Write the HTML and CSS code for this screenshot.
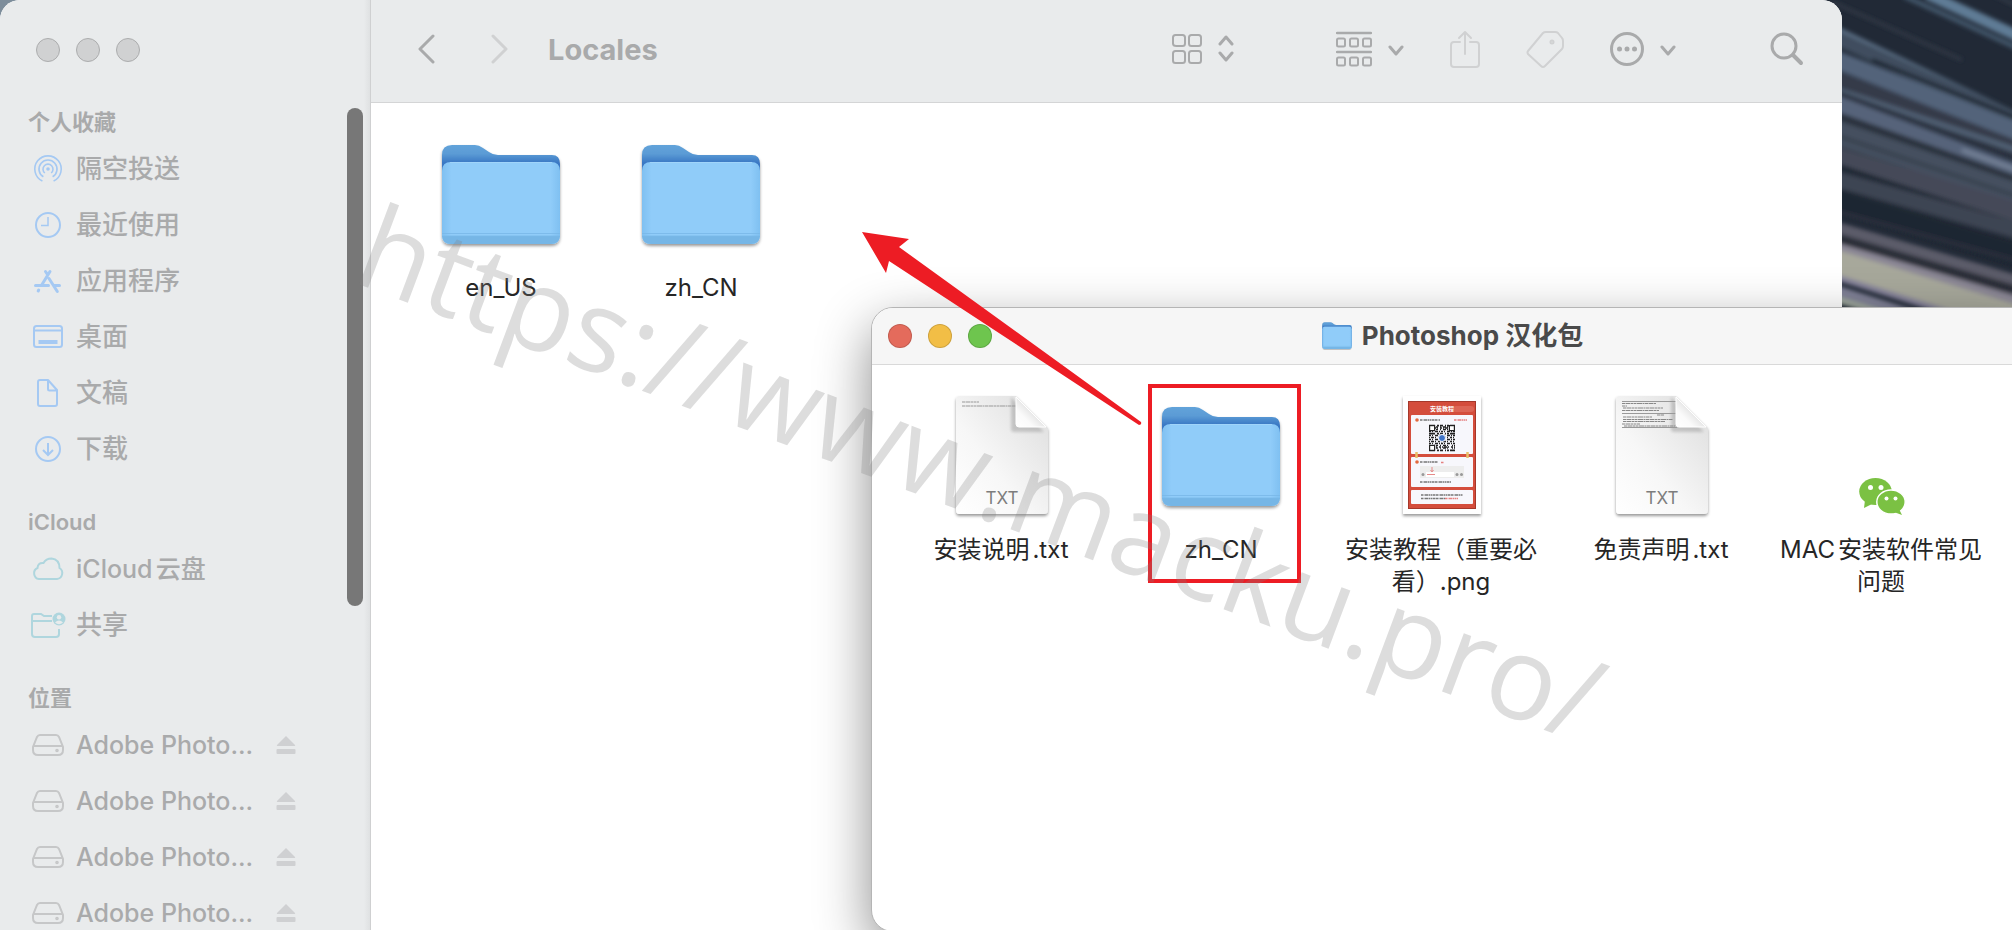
FILE: index.html
```html
<!DOCTYPE html>
<html lang="zh-CN">
<head>
  <title>Locales</title>
  <meta charset="UTF-8">
  <meta name="viewport" content="width=device-width, initial-scale=1.0">
  <link rel="stylesheet" href="styles.css">
</head>
<body>
  <!-- shared icons -->
  <svg class="defs" aria-hidden="true">
    <defs>
      <linearGradient id="folder-back" x1="0" y1="0" x2="0" y2="1">
        <stop offset="0" stop-color="#62a3da"/><stop offset=".1" stop-color="#5b9bd5"/><stop offset=".2" stop-color="#3a78c4"/><stop offset="1" stop-color="#3a78c4"/>
      </linearGradient>
      <linearGradient id="folder-front" x1="0" y1="0" x2="1" y2="0">
        <stop offset="0" stop-color="#7fc0f1"/><stop offset=".08" stop-color="#90ccf9"/><stop offset=".92" stop-color="#90ccf9"/><stop offset="1" stop-color="#7fc0f1"/>
      </linearGradient>
      <linearGradient id="paper" x1="0" y1="1" x2="1" y2="0">
        <stop offset="0" stop-color="#fff"/><stop offset=".4" stop-color="#f7f7f7"/><stop offset="1" stop-color="#dcdcdc"/>
      </linearGradient>
      <linearGradient id="fold" x1="0" y1="1" x2=".6" y2=".4">
        <stop offset="0" stop-color="#fff"/><stop offset=".5" stop-color="#fafafa"/><stop offset="1" stop-color="#dedede"/>
      </linearGradient>
      <filter id="drop" x="-10%" y="-10%" width="120%" height="120%">
        <feDropShadow dx="0" dy="2" stdDeviation="1.5" flood-opacity=".4"/>
      </filter>
      <filter id="soft"><feGaussianBlur stdDeviation="1.6"/></filter>
      <filter id="streaks"><feGaussianBlur stdDeviation="2.2"/></filter>

      <symbol id="folder" viewBox="0 0 128 128">
        <g filter="url(#drop)">
          <path fill="url(#folder-back)" d="M5 26q0-10 10-10h23q4 0 8 3l6 4q4 3 9 3h54q8 0 8 9v70H5z"/>
          <path fill="url(#folder-front)" d="M5 42q0-9 9-9h100q9 0 9 9v64q0 9-9 9H14q-9 0-9-9z"/>
        </g>
        <path fill="#76b6e6" d="M5 107h118q-1 8-9 8H14q-8 0-9-8z"/>
        <path stroke="#79b8e8" d="M5 104.500h118M5 107h118" opacity=".8"/>
        <path stroke="#a5d7fb" d="M13 33.500h102" opacity=".8"/>
      </symbol>
      <symbol id="page" viewBox="0 0 128 128">
        <path filter="url(#drop)" fill="url(#paper)" d="M22 5h57l32 32v82q0 4-4 4H22q-3 0-3-4V9q0-4 3-4z"/>
        <path fill="#000" opacity=".16" filter="url(#soft)" d="M74 6v32q0 3 3 3h30z"/>
      </symbol>
      <symbol id="page-fold" viewBox="0 0 128 128">
        <path fill="url(#fold)" stroke="#fff" d="M79 6v27q0 3 3 3h27z"/>
      </symbol>

      <symbol id="drive" viewBox="0 0 36 30" fill="none" stroke="currentColor" stroke-width="2">
        <path d="M10 5h16q2 0 3 2l4 10v3q0 5-5 5H8q-5 0-5-5v-3L7 7q1-2 3-2z"/>
        <path d="M4 16h28"/><circle cx="27" cy="20.500" r=".8"/>
      </symbol>
      <symbol id="eject" viewBox="0 0 20 20" fill="currentColor">
        <path d="M10 1 19 10q.6 1-.4 1H1.400q-1 0-.4-1z"/><rect x=".5" y="14" width="19" height="5" rx="1"/>
      </symbol>
      <symbol id="chevron-down" viewBox="0 0 16 34">
        <path fill="none" stroke="currentColor" stroke-width="3" stroke-linecap="round" stroke-linejoin="round" d="m2 15 6 7 6-7"/>
      </symbol>
    </defs>
  </svg>

  <div class="desktop">
    <svg class="wallpaper" viewBox="0 0 200 310" preserveAspectRatio="none" aria-hidden="true">
      <rect width="200" height="310" fill="#212936"/>
      <g filter="url(#streaks)" fill="none">
        <path stroke="#5f7b95" stroke-width="11" d="M115-6 210 38"/>
        <path stroke="#42566a" stroke-width="5" d="M92-4 210 50"/>
        <path stroke="#343c48" stroke-width="3" d="M180-6 210 8M20 2 150 60"/>
        <path stroke="#5b7086" stroke-width="4" d="M20 26 210 117"/>
        <path stroke="#404e5e" stroke-width="14" d="M20 36 210 122"/>
        <path stroke="#1e2632" stroke-width="4" d="M60 60 210 120"/>
        <path stroke="#52637a" stroke-width="18" d="M20 58 210 134"/>
        <path stroke="#363b48" stroke-width="14" d="M20 76 210 150"/>
        <path stroke="#505e72" stroke-width="6" d="M20 88 210 152"/>
        <path stroke="#2b333f" stroke-width="5" d="M20 91 210 160"/>
        <path stroke="#56647a" stroke-width="16" d="M20 102 210 174"/>
        <path stroke="#7a879c" stroke-width="3" d="M150 150 210 172"/>
        <path stroke="#29333d" stroke-width="8" d="M20 114 210 182"/>
        <path stroke="#444f5f" stroke-width="26" d="M20 132 210 198"/>
        <path stroke="#343d4a" stroke-width="3" d="M20 134 210 198M20 145 210 208"/>
        <path stroke="#444958" stroke-width="20" d="M20 156 210 214"/>
        <path stroke="#1f2833" stroke-width="4" d="M20 164 210 226"/>
        <path stroke="#3e4552" stroke-width="16" d="M20 178 210 232"/>
        <path stroke="#1e2632" stroke-width="24" d="M20 200 210 256"/>
        <path stroke="#2d333f" stroke-width="3" d="M20 210 210 262"/>
        <path stroke="#5b5c69" stroke-width="11" d="M20 226 210 282"/>
        <path stroke="#2b2d38" stroke-width="9" d="M20 237 210 292"/>
        <path stroke="#8b8795" stroke-width="9" d="M20 246 210 302"/>
        <path stroke="#a7a89b" stroke-width="26" d="M20 262 210 320"/>
        <path stroke="#85829a" stroke-width="6" d="M20 276 160 320"/>
        <path stroke="#7f8095" stroke-width="12" d="M20 290 120 322"/>
        <path stroke="#9ca59b" stroke-width="7" d="M20 298 100 322"/>
      </g>
    </svg>

    <main class="window locales">
      <aside class="sidebar">
        <div class="lights inactive">
          <button aria-label="关闭"></button><button aria-label="最小化"></button><button aria-label="缩放"></button>
        </div>
        <nav>
          <h2>个人收藏</h2>
          <ul class="blue">
            <li><a href="#airdrop">
              <svg viewBox="0 0 36 30" fill="none" stroke="currentColor" stroke-width="1.600">
                <circle cx="18" cy="15" r="1.800" fill="currentColor" stroke="none"/>
                <path d="M14.800 19a5 5 0 1 1 6.400 0M13.400 22.800a9 9 0 1 1 9.200 0M12.400 27a13.200 13.200 0 1 1 11.200 0"/>
              </svg>隔空投送</a></li>
            <li><a href="#recents">
              <svg viewBox="0 0 36 30" fill="none" stroke="currentColor" stroke-width="2">
                <circle cx="18" cy="15" r="12"/><path stroke-width="1.500" d="M18 7v8.500h-7"/>
              </svg>最近使用</a></li>
            <li><a href="#applications">
              <svg viewBox="0 0 36 30" fill="none" stroke="currentColor" stroke-width="3" stroke-linecap="round">
                <path d="M5.500 19.500h13M24.500 19.500h5M20 5.500 12 18.500M15.500 5.500l2 3M8.700 24l-.5 1M19 12.500l8.300 13"/>
              </svg>应用程序</a></li>
            <li><a href="#desktop">
              <svg viewBox="0 0 36 30" fill="none" stroke="currentColor" stroke-width="2">
                <rect x="4" y="4" width="28" height="21" rx="2.500"/><path d="M4 8.500h28"/><path stroke-width="4" d="M8.500 20h19"/>
              </svg>桌面</a></li>
            <li><a href="#documents">
              <svg viewBox="0 0 36 30" fill="none" stroke="currentColor" stroke-width="2" stroke-linejoin="round">
                <path d="M18 2h-8q-2 0-2 2v22q0 2 2 2h15q2 0 2-2V12zv9q0 1.500 1.500 1.500H27"/>
              </svg>文稿</a></li>
            <li><a href="#downloads">
              <svg viewBox="0 0 36 30" fill="none" stroke="currentColor" stroke-width="2">
                <circle cx="18" cy="15" r="12"/><path d="M18 9v11.500M13 16l5 5 5-5"/>
              </svg>下载</a></li>
          </ul>
          <h2>iCloud</h2>
          <ul class="teal">
            <li><a class="latin" href="#icloud">
              <svg viewBox="0 0 36 30" fill="none" stroke="currentColor" stroke-width="2">
                <path d="M9 25h18a6 6 0 0 0 2.500-11q0-8.500-8-9.500-5.500 0-8 4.500-5.500-.5-6 5A5.800 5.800 0 0 0 9 25z"/>
              </svg>iCloud云盘</a></li>
            <li><a href="#shared">
              <svg viewBox="0 0 36 30" fill="none" stroke="currentColor" stroke-width="2">
                <path d="M22 6h-8l-3-2H4q-2 0-2 2v18q0 3 3 3h21q3 0 3-3v-5M2 11h20"/>
                <circle cx="29" cy="9" r="6.500" fill="currentColor" stroke="none"/>
                <circle cx="29" cy="7.300" r="2.200" fill="#e9ebec" stroke="none"/><path fill="#e9ebec" stroke="none" d="M25 12.500q4-4 8 0-4 3.500-8 0z"/>
              </svg>共享</a></li>
          </ul>
          <h2>位置</h2>
          <ul class="gray">
            <li><a class="latin" href="#vol1"><svg><use href="#drive"/></svg>Adobe Photo...</a><button aria-label="推出"><svg><use href="#eject"/></svg></button></li>
            <li><a class="latin" href="#vol2"><svg><use href="#drive"/></svg>Adobe Photo...</a><button aria-label="推出"><svg><use href="#eject"/></svg></button></li>
            <li><a class="latin" href="#vol3"><svg><use href="#drive"/></svg>Adobe Photo...</a><button aria-label="推出"><svg><use href="#eject"/></svg></button></li>
            <li><a class="latin" href="#vol4"><svg><use href="#drive"/></svg>Adobe Photo...</a><button aria-label="推出"><svg><use href="#eject"/></svg></button></li>
          </ul>
        </nav>
        <div class="scrollbar"></div>
      </aside>

      <section class="content">
        <header class="toolbar">
          <button class="back" aria-label="返回"><svg width="18" height="34" viewBox="0 0 18 34"><path d="M16 4 3 17l13 13"/></svg></button>
          <button class="forward dim" aria-label="前进"><svg width="18" height="34" viewBox="0 0 18 34"><path d="m2 4 13 13L2 30"/></svg></button>
          <h1>Locales</h1>
          <button class="view" aria-label="显示方式">
            <svg width="30" height="34" viewBox="0 0 30 34"><path d="M3.500 3h7q2.500 0 2.500 2.500v6Q13 14 10.500 14h-6Q1 14 1 11.500v-6Q1 3 3.500 3zM19.500 3h7q2.500 0 2.500 2.500v6q0 2.500-2.500 2.500h-7Q17 14 17 11.500v-6Q17 3 19.500 3zM3.500 19h7q2.500 0 2.500 2.500v7q0 2.500-2.500 2.500h-7Q1 31 1 28.500v-7Q1 19 3.500 19zM19.500 19h7q2.500 0 2.500 2.500v7q0 2.500-2.500 2.500h-7q-2.500 0-2.500-2.500v-7q0-2.500 2.500-2.500z"/></svg>
            <svg width="16" height="34" viewBox="0 0 16 34"><path stroke-width="3" d="m2 12 6-7 6 7M2 21l6 7 6-7"/></svg>
          </button>
          <button class="group" aria-label="分组">
            <svg width="36" height="36" viewBox="0 0 36 36">
              <path stroke-width="2.400" d="M1 2h34M1 21h34"/>
              <g>
                <rect x="1" y="7.500" width="8" height="8" rx="1.500"/><rect x="14" y="7.500" width="8" height="8" rx="1.500"/><rect x="27" y="7.500" width="8" height="8" rx="1.500"/>
                <rect x="1" y="26.500" width="8" height="8" rx="1.500"/><rect x="14" y="26.500" width="8" height="8" rx="1.500"/><rect x="27" y="26.500" width="8" height="8" rx="1.500"/>
              </g>
            </svg>
            <svg width="16" height="34"><use href="#chevron-down"/></svg>
          </button>
          <button class="dim" aria-label="共享"><svg width="30" height="38" viewBox="0 0 30 38"><path d="M10 12H4q-3 0-3 3v19q0 3 3 3h22q3 0 3-3V15q0-3-3-3h-6M15 24V2M9 8l6-6 6 6"/></svg></button>
          <button class="dim" aria-label="标签"><svg width="38" height="38" viewBox="0 0 38 38"><path d="M20 2h9q2 0 3 1l4 5q1 1 1 3v5q0 2-1 3L19 36q-2 2-4 0L2 24q-1-2 0-3L17 3q1-1 3-1z"/><circle cx="26" cy="12" r="1.500"/></svg></button>
          <button class="more" aria-label="更多">
            <svg width="34" height="34" viewBox="0 0 34 34"><circle cx="17" cy="17" r="15.500"/><g class="dots"><circle cx="9.500" cy="17" r="2.500"/><circle cx="17" cy="17" r="2.500"/><circle cx="24.500" cy="17" r="2.500"/></g></svg>
            <svg width="16" height="34"><use href="#chevron-down"/></svg>
          </button>
          <button class="search" aria-label="搜索"><svg width="34" height="34" viewBox="0 0 34 34"><circle cx="14" cy="14" r="12"/><path stroke-width="4" d="m23 23 8 8"/></svg></button>
        </header>
        <ul class="files">
          <li><svg><use href="#folder"/></svg><span>en_US</span></li>
          <li><svg><use href="#folder"/></svg><span>zh_CN</span></li>
        </ul>
      </section>
    </main>

    <section class="window package">
      <header class="titlebar">
        <div class="lights">
          <button class="close" aria-label="关闭"></button><button class="minimize" aria-label="最小化"></button><button class="maximize" aria-label="缩放"></button>
        </div>
        <h1><svg viewBox="4 15 120 104" preserveAspectRatio="none"><use href="#folder" width="128" height="128"/></svg>Photoshop 汉化包</h1>
      </header>
      <ul class="files wide">
        <li>
          <svg viewBox="0 0 128 128">
            <use href="#page"/>
            <path stroke="#999" stroke-dasharray="3 .5 5 .5 2 .5" d="M25 11h17M25 15h54"/>
            <use href="#page-fold"/>
            <text class="ext" x="65" y="113">TXT</text>
          </svg>
          <span>安装说明.txt</span>
        </li>
        <li><svg><use href="#folder"/></svg><span>zh_CN</span></li>
        <li>
          <svg viewBox="0 0 128 128">
            <rect filter="url(#drop)" x="26" y="5" width="78" height="118" fill="#fff"/>
            <rect x="31.500" y="10.500" width="67" height="107" fill="#d44d3c" stroke="#a5382b"/>
            <rect x="76" y="15" width="21" height="6" rx="3" fill="#dc6555"/>
            <text class="poster" x="65" y="20">安装教程</text>
            <g fill="#f7f7fc">
              <rect x="34" y="24" width="62" height="39" rx="1"/><rect x="34" y="66" width="62" height="30" rx="1"/><rect x="34" y="99" width="62" height="14" rx="1"/>
            </g>
            <g fill="#e2693f"><circle cx="40" cy="29" r="1.800"/><circle cx="40" cy="71" r="1.800"/></g>
            <g stroke="#777" stroke-width="1.600" stroke-dasharray="2 .5 1 .5 3 .5">
              <path d="M43 29h20M43 71h18M43 91h31M44 104h42M44 107.500h24"/>
              <path stroke="#e58080" d="M77 29h13M64 71.500h3M68 107.500h13"/>
            </g>
            <rect x="43" y="75" width="44" height="12" fill="#ededed"/><rect x="49" y="81" width="28" height="5" fill="#fff"/>
            <path stroke="#e58a8a" d="M50 83.500h8M55 76v4M53.500 79l1.500 2 1.500-2" fill="none"/>
            <g fill="#999"><circle cx="46" cy="83.500" r="1.500"/><circle cx="80" cy="83.500" r="1.500"/><circle cx="84.500" cy="83.500" r="1.500"/></g>
            <path stroke="#e8c069" stroke-width="2.500" d="M39.500 61v6M90.500 61v6"/>
            <g stroke="#222" stroke-width="1.600">
              <path stroke-dasharray="6 2 2 1 3 2 1 1 2 1" d="M52 34.600h26M52 59.400h26M52 42.600h26"/>
              <path stroke-dasharray="1 4 1 1 2 2 1 2 3 1" d="M52 36h26M52 38.500h26M52 57h26M52 54.500h26"/>
              <path stroke-dasharray="2 1 1 2 3 1 1 1" d="M52 40.500h26M52 44.500h26M52 48.500h26M52 52.500h26"/>
              <path stroke-dasharray="1 1 3 1 1 2 2 1" d="M52 46.500h26M52 50.500h26M53 56h26M54 37h24"/>
            </g>
            <g fill="none" stroke="#222" stroke-width="1.200"><rect x="52.600" y="34.600" width="5" height="5" fill="#fff"/><rect x="72.400" y="34.600" width="5" height="5" fill="#fff"/><rect x="52.600" y="54.400" width="5" height="5" fill="#fff"/></g>
            <circle cx="65" cy="47" r="3.500" fill="#3f74c8" stroke="#fff"/>
          </svg>
          <span>安装教程（重要必看）.png</span>
        </li>
        <li>
          <svg viewBox="0 0 128 128">
            <use href="#page"/>
            <path stroke="#999" d="M25 10.500h55M25 22.500h55M25 36.500h55"/>
            <g stroke="#888" stroke-dasharray="3 .5 5 .5 2 .5">
              <path d="M25 12.500h34M25 15h5M26 17h40M25 19.500h37M60 24h7M26 26h29M26 28.500h50M26 30.500h42M25 33h18M27 35h51"/>
            </g>
            <use href="#page-fold"/>
            <text class="ext" x="65" y="113">TXT</text>
          </svg>
          <span>免责声明.txt</span>
        </li>
        <li>
          <svg viewBox="0 0 128 128">
            <g fill="#7bc143">
              <ellipse cx="58.500" cy="100.500" rx="16.300" ry="13.500"/><path d="m48 109-1 8 8-4z"/>
              <ellipse cx="74" cy="111" rx="14.200" ry="12" stroke="#fff" stroke-width="1.500"/><path d="m82 118 3 6-8-3z"/>
            </g>
            <g fill="#fff"><circle cx="53.500" cy="96.500" r="2.500"/><circle cx="64" cy="96.500" r="2.500"/><circle cx="69.500" cy="107.500" r="2"/><circle cx="78.500" cy="107.500" r="2"/></g>
          </svg>
          <span>MAC安装软件常见问题</span>
        </li>
      </ul>
    </section>

    <!-- arrow, box and watermark drawn over both windows -->
    <svg class="notes">
      <rect x="1150" y="386" width="149" height="195" fill="none" stroke="#ed1c24" stroke-width="4"/>
      <path fill="#ed1c24" d="M862 232 909 239 899 247 1141 422q1 3-2 3L889 261 886 273z"/>
      <text class="watermark" transform="translate(350 281) rotate(20.6)">https://www.macku.pro/</text>
    </svg>
  </div>
</body>
</html>
```
FILE: styles.css
```css
* {
  box-sizing: border-box;
}
body {
  margin: 0;
  font-family: Inter, "Noto Sans CJK SC", sans-serif;
  color: #262626;
  text-autospace: normal;
}
h1, h2, ul {
  margin: 0;
  padding: 0;
}
ul {
  list-style: none;
}
button {
  padding: 0;
  border: 0;
  background: none;
  color: inherit;
}
svg {
  display: block;
  flex: none;
}
.defs {
  position: absolute;
  width: 0;
  height: 0;
}

.desktop {
  position: relative;
  height: 100vh;
  overflow: hidden;
  background: #7d8d9b;
}
.wallpaper {
  position: absolute;
  top: 0;
  right: 0;
  width: 200px;
  height: 310px;
}
.window {
  position: absolute;
  overflow: hidden;
  background: #fff;
}

/* back window */
.locales {
  top: 0;
  left: 0;
  right: 170px;
  bottom: 0;
  display: flex;
  border-radius: 20px 20px 0 0;
}
.sidebar {
  position: relative;
  flex: none;
  width: 371px;
  background: linear-gradient(to left, #dfe1e2, #e9ebec 6px);
  border-right: 1px solid #cfd0d1;
  color: #a9aaab;
}
.lights {
  display: flex;
  gap: 16px;
}
.lights button {
  width: 24px;
  height: 24px;
  border-radius: 50%;
  border: 1px solid rgba(0, 0, 0, .15);
}
.inactive {
  height: 103px;
  padding: 38px 36px 0;
}
.inactive button {
  background: #d0d1d2;
  border-color: #acadae;
}
.sidebar h2 {
  height: 38px;
  margin-top: 26px;
  padding-left: 28px;
  font-size: 22px;
  font-weight: 600;
  line-height: 38px;
}
.sidebar h2:first-child {
  margin-top: 0;
}
.sidebar li {
  display: flex;
  align-items: center;
  height: 56px;
  padding-left: 30px;
}
.sidebar a {
  display: flex;
  align-items: center;
  gap: 10px;
  width: 246px;
  color: inherit;
  font-size: 26px;
  font-weight: 500;
  line-height: 30px;
  text-decoration: none;
  white-space: nowrap;
}
.sidebar .latin {
  font-size: 25px;
}
.sidebar a svg {
  width: 36px;
  height: 30px;
}
.blue svg {
  color: #a5c9f3;
}
.teal svg {
  color: #afd6de;
}
.gray svg {
  color: #c6c7c8;
}
.sidebar li button svg {
  width: 20px;
  height: 20px;
  color: #cfd0d2;
}
.scrollbar {
  position: absolute;
  top: 108px;
  right: 7px;
  width: 16px;
  height: 498px;
  border-radius: 8px;
  background: #777;
}

.content {
  flex: 1;
  min-width: 0;
}
.toolbar {
  display: flex;
  align-items: center;
  height: 103px;
  padding: 0 38px 4px 46px;
  background: #e9ebec;
  border-bottom: 1px solid #d4d5d6;
  color: #a9aaab;
}
.toolbar h1 {
  flex: 1;
  margin-left: 39px;
  font-size: 29px;
  font-weight: 700;
}
.toolbar button {
  display: flex;
  align-items: center;
  gap: 16px;
  margin-right: 46px;
}
.toolbar svg {
  fill: none;
  stroke: currentColor;
  stroke-width: 2;
  stroke-linecap: round;
  stroke-linejoin: round;
}
.toolbar .back {
  margin-right: 56px;
}
.toolbar .forward {
  margin-right: 0;
}
.toolbar .back svg, .toolbar .forward svg, .more svg, .search svg {
  stroke-width: 3;
}
.toolbar .view {
  margin-right: 102px;
}
.toolbar .more {
  margin-right: 94px;
}
.toolbar .search {
  margin-right: 0;
}
.toolbar .dim {
  color: #d0d1d2;
}
.toolbar .dots {
  fill: currentColor;
  stroke: none;
}

.files {
  display: grid;
  grid-template-columns: repeat(auto-fill, 200px);
  padding: 26px 30px;
}
.files li {
  display: flex;
  flex-direction: column;
  align-items: center;
  gap: 15px;
  font-size: 24px;
  line-height: 32px;
  text-align: center;
}
.files li svg {
  width: 128px;
  height: 128px;
}
.files span {
  max-width: 206px;
}

/* front window */
.package {
  top: 307px;
  left: 871px;
  right: -22px;
  bottom: -2px;
  border: 1px solid #b5b5b5;
  border-radius: 22px;
  box-shadow: 0 20px 54px rgba(0, 0, 0, .45);
}
.titlebar {
  display: grid;
  grid-template-columns: 1fr auto 1fr;
  align-items: center;
  height: 57px;
  padding: 0 16px;
  background: #f6f6f6;
  border-bottom: 1px solid #d9d9d9;
}
.titlebar h1 {
  display: flex;
  align-items: center;
  gap: 10px;
  color: #4a4a4a;
  font-size: 26px;
  font-weight: 700;
  line-height: 32px;
}
.titlebar h1 svg {
  width: 30px;
  height: 28px;
}
.close {
  background: #e46b5c;
}
.minimize {
  background: #f2be46;
}
.maximize {
  background: #6ec54e;
}
.wide {
  grid-template-columns: repeat(auto-fill, 220px);
  padding: 26px 19px;
}
.ext {
  font-size: 17px;
  fill: #7d7d7d;
  text-anchor: middle;
}
.poster {
  font-size: 6px;
  font-weight: 700;
  fill: #fff;
  text-anchor: middle;
}

.notes {
  position: absolute;
  top: 0;
  left: 0;
  width: 100%;
  height: 100%;
  pointer-events: none;
}
.watermark {
  font-family: "Open Sans", sans-serif;
  font-size: 116px;
  fill: #808080;
  fill-opacity: .27;
}
```
